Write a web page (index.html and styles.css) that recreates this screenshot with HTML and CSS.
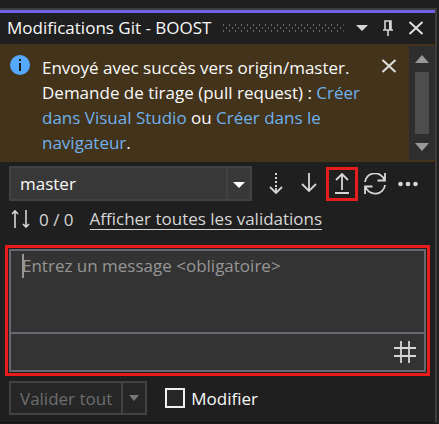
FILE: index.html
```html
<!DOCTYPE html>
<html lang="fr">
<head>
<meta charset="utf-8">
<title>Modifications Git - BOOST</title>
<link rel="stylesheet" href="styles.css">
</head>
<body>
<main class="panel">
  <header class="titlebar">
    <h1>Modifications Git - BOOST</h1>
    <svg class="grip" height="8" aria-hidden="true">
      <defs><pattern id="dots" width="6" height="8" patternUnits="userSpaceOnUse"><path d="M0 0h1v2H0zM3 3h1v2H3zM0 6h1v2H0z" fill="#6a6a6a"/></pattern></defs>
      <rect width="100%" height="8" fill="url(#dots)"/>
    </svg>
    <div class="window-buttons">
      <button aria-label="Options"><svg width="12" height="14"><path d="M0 4h12L6 10z" fill="#d6d6d6"/></svg></button>
      <button aria-label="Épingler"><svg width="12" height="16" fill="none" stroke="#d6d6d6"><path d="M3 10V1h6v9M1 10h10M6 10v6" stroke-width="1.6"/><path d="M8 1v9" stroke-width="2"/></svg></button>
      <button aria-label="Fermer"><svg width="16" height="14"><path d="M1.500 1l13 12M14.500 1l-13 12" stroke="#e0e0e0" stroke-width="2"/></svg></button>
    </div>
  </header>

  <section class="notice">
    <svg class="info" width="20" height="20"><circle cx="10" cy="10" r="10" fill="#55aaff"/><path d="M9 4h2v2H9zM9 8h2v8H9z" fill="#1f1f1f"/></svg>
    <p>Envoyé avec succès vers origin/master. Demande de tirage (pull request) : <a href="#">Créer dans Visual Studio</a> ou <a href="#">Créer dans le navigateur</a>.</p>
    <button class="dismiss" aria-label="Fermer"><svg width="16" height="14"><path d="M1.500 1l13 12M14.500 1l-13 12" stroke="#e0e0e0" stroke-width="2"/></svg></button>
    <div class="scrollbar" aria-hidden="true">
      <svg width="14" height="8"><path d="M7 0l7 8H0z" fill="#999"/></svg>
      <div class="thumb"></div>
      <svg width="14" height="8"><path d="M0 0h14L7 8z" fill="#999"/></svg>
    </div>
  </section>

  <div class="toolbar">
    <div class="branch">
      <select aria-label="Branche"><option>master</option></select>
      <svg class="arrow" width="12" height="6"><path d="M0 0h12L6 6z" fill="#fff"/></svg>
    </div>
    <button aria-label="Récupérer"><svg width="20" height="22" fill="none" stroke="#d6d6d6" stroke-width="1.800"><path d="M10 0v14" stroke-width="2" stroke-dasharray="2 2"/><path d="M10 15v5M4 14l6 6 6-6"/></svg></button>
    <button aria-label="Tirer"><svg width="20" height="22" fill="none" stroke="#d6d6d6" stroke-width="1.800"><path d="M10 0v18M3 11l7 7 7-7"/></svg></button>
    <button class="marked" aria-label="Envoyer"><svg width="20" height="22" fill="none" stroke="#d6d6d6" stroke-width="1.800"><path d="M10 17V1M4 7l6-6 6 6M3 20h14"/></svg></button>
    <button aria-label="Synchroniser"><svg width="22" height="22" fill="none" stroke="#d6d6d6" stroke-width="1.800"><path d="M1 9a10 9.500 0 0 1 19.500-2M21 0v7.500h-7.500M21 12a10 9.500 0 0 1-19.500 2M1 21v-7.500h7.500"/></svg></button>
    <button aria-label="Plus"><svg width="20" height="22" fill="#d6d6d6"><circle cx="2.500" cy="11" r="2.300"/><circle cx="10" cy="11" r="2.300"/><circle cx="17.500" cy="11" r="2.300"/></svg></button>
  </div>

  <div class="status">
    <svg width="20" height="20" fill="none" stroke="#d6d6d6" stroke-width="1.600"><path d="M5 19V2M2 5l3-3 3 3M16 1v17M13 15l3 3 3-3"/></svg>
    <span>0 / 0</span>
    <a href="#">Afficher toutes les validations</a>
  </div>

  <section class="message">
    <textarea aria-label="Message" placeholder="Entrez un message &lt;obligatoire&gt;"></textarea>
    <span class="caret"></span>
    <div class="message-tools">
      <button aria-label="Référence"><svg width="22" height="22"><path d="M7 0v22M15 0v22M0 7h22M0 15h22" stroke="#d6d6d6" stroke-width="1.800"/></svg></button>
    </div>
  </section>

  <footer class="actions">
    <div class="split">
      <button disabled>Valider tout</button>
      <button disabled aria-label="Options de validation"><svg width="10" height="6"><path d="M0 0h10L5 6z" fill="#777"/></svg></button>
    </div>
    <label><input type="checkbox">Modifier</label>
  </footer>
</main>
</body>
</html>
```
FILE: styles.css
```css
* { box-sizing: border-box; }

body {
  margin: 0;
  background: #1f1f1f;
  color: #fafafa;
  font: 17px/25px "Open Sans", "Noto Sans", sans-serif;
}

button {
  margin: 0;
  padding: 0;
  border: 0;
  background: none;
  color: inherit;
  font: inherit;
}

svg { display: block; flex: none; }

.panel {
  margin: 8px 2px 0 0;
  border-top: 2px solid #3d3d3d;
  border-right: 2px solid #3d3d3d;
  border-bottom: 1px solid #180f12;
}

.titlebar {
  display: flex;
  align-items: center;
  gap: 12px;
  height: 34px;
  padding: 0 11px 2px 7px;
  border-top: 3px solid #7160e8;
}

.titlebar h1 {
  margin: 0;
  font-size: 17px;
  font-weight: 400;
  white-space: nowrap;
}

.grip { flex: 1; width: 0; }

.window-buttons {
  display: flex;
  align-items: center;
  gap: 14px;
}

.notice {
  display: flex;
  align-items: flex-start;
  height: 118px;
  padding: 2px 0 2px 10px;
  background: #42331a;
}

.info { margin-top: 9px; }

.notice p {
  flex: 1;
  margin: 9px 0 0 12px;
}

.notice a { color: #70b0ec; text-decoration: none; }

.dismiss { margin: 13px 12px 0 0; }

.scrollbar {
  display: flex;
  flex-direction: column;
  align-items: center;
  justify-content: space-between;
  align-self: stretch;
  width: 26px;
  padding: 9px 0;
  background: #2e2e2e;
}

.thumb {
  flex: 1;
  width: 14px;
  margin: 9px 0;
  background: #4d4d4d;
}

.toolbar {
  display: flex;
  align-items: center;
  gap: 1px;
  padding: 4px 11px 0 9px;
}

.toolbar button {
  display: grid;
  flex: none;
  place-items: center;
  width: 32px;
  height: 34px;
}

.toolbar .marked { border: 3px solid #e81c1c; }

.branch {
  position: relative;
  flex: 1;
  margin-right: 7px;
}

.branch select {
  display: block;
  width: 100%;
  height: 35px;
  padding: 0 9px;
  appearance: none;
  border: 2px solid #424242;
  border-radius: 0;
  background: linear-gradient(#424242, #424242) right 22px top 0 / 2px 100% no-repeat #383838;
  color: #fafafa;
  font: inherit;
}

.arrow {
  position: absolute;
  top: 16px;
  right: 7px;
}

.status {
  display: flex;
  align-items: center;
  height: 36px;
  padding-left: 10px;
  color: #d6d6d6;
}

.status span { margin: 0 16px 0 9px; }

.status a {
  border-bottom: 1px solid #d6d6d6;
  color: inherit;
  line-height: 20px;
  text-decoration: none;
}

.message {
  position: relative;
  margin: 12px 9px 0;
  border: 2px solid #686870;
  background: #333;
  outline: 3px solid #e81c1c;
  outline-offset: 1px;
}

.message textarea {
  display: block;
  width: 100%;
  height: 81px;
  padding: 2px 11px;
  resize: none;
  border: 0;
  background: none;
  color: #fafafa;
  font: inherit;
}

.message textarea::placeholder { color: #969696; }

.caret {
  position: absolute;
  top: 3px;
  left: 11px;
  width: 2px;
  height: 24px;
  background: #969696;
}

.message-tools {
  display: flex;
  align-items: center;
  justify-content: flex-end;
  height: 38px;
  padding-right: 8px;
  border-top: 2px solid #686870;
}

.actions {
  display: flex;
  align-items: center;
  gap: 18px;
  padding: 9px 9px 7px;
}

.split {
  display: flex;
  height: 34px;
  border: 2px solid #424242;
  background: #262626;
  color: #6d6d6d;
}

.split button { padding: 0 9px; }

.split button + button {
  padding: 0 6px;
  border-left: 2px solid #424242;
}

.actions label {
  display: flex;
  align-items: center;
  gap: 6px;
}

.actions input {
  width: 20px;
  height: 20px;
  margin: 0;
  appearance: none;
  border: 2px solid #f0f0f0;
  background: #262626;
}
```
